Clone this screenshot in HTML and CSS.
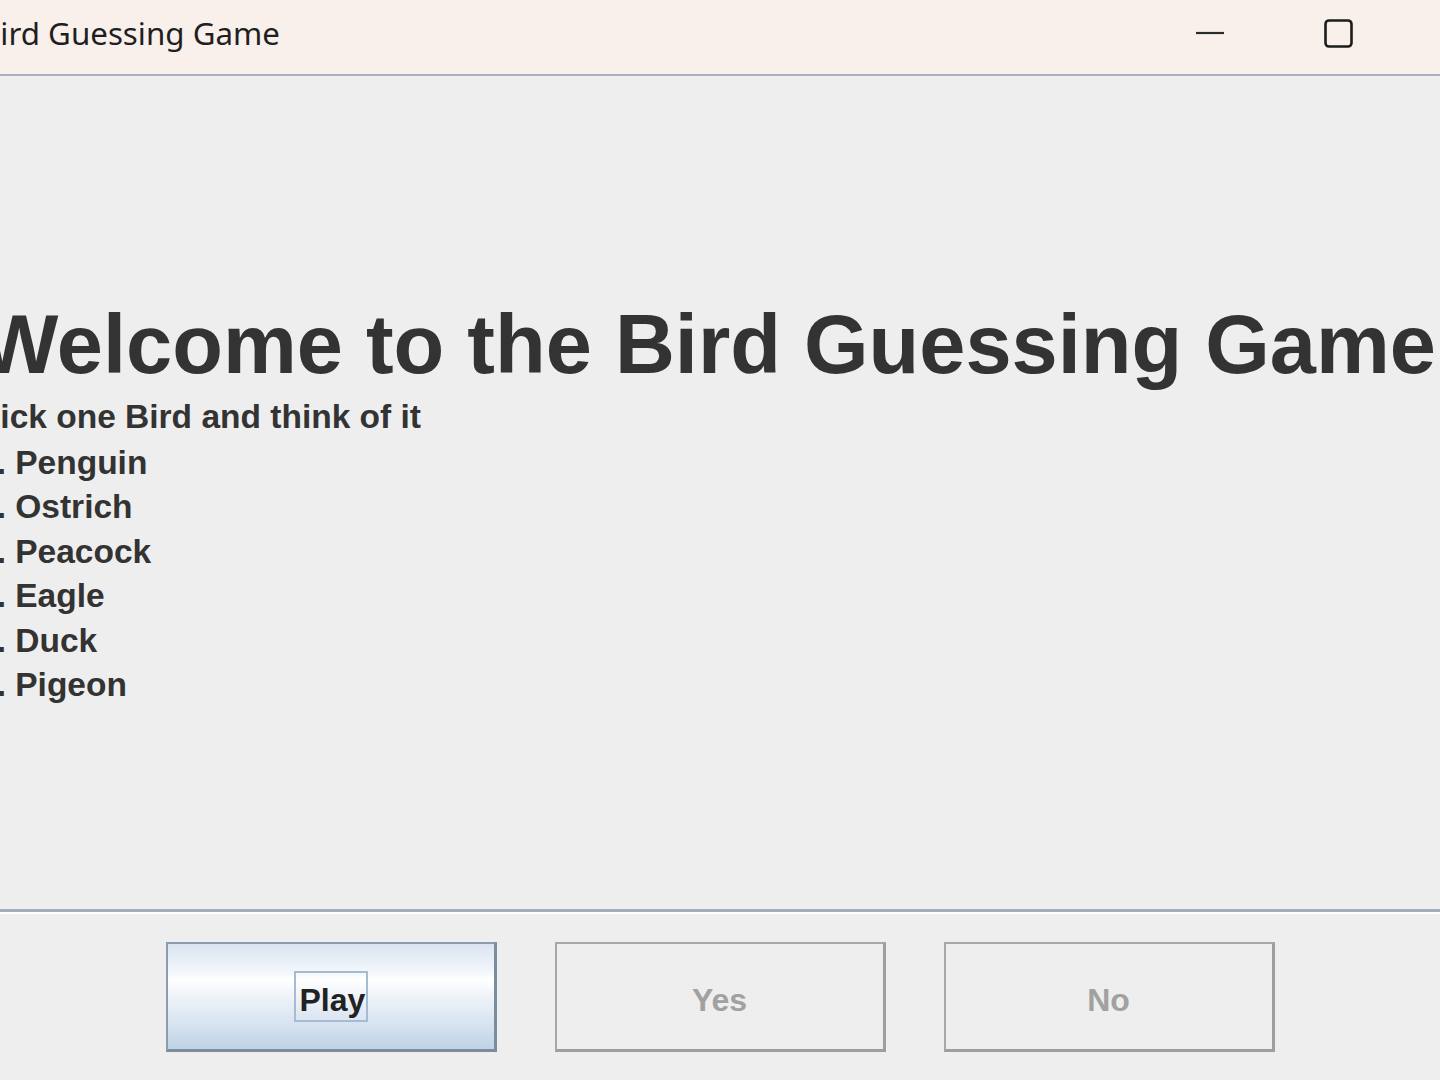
FILE: index.html
```html
<!DOCTYPE html>
<html lang="en">
<head>
<meta charset="utf-8">
<title>Bird Guessing Game</title>
<link rel="stylesheet" href="styles.css">
</head>
<body>
<div class="window">
  <header class="titlebar">
    <span class="title">Bird Guessing Game</span>
    <div class="controls">
      <span class="ctl ctl-min"><svg width="28" height="4" viewBox="0 0 28 4"><line x1="0" y1="2" x2="28" y2="2" stroke="#2b2b2b" stroke-width="2.2"/></svg></span>
      <span class="ctl ctl-max"><svg width="30" height="30" viewBox="0 0 30 30"><rect x="1.5" y="1.5" width="26" height="26" rx="3.5" ry="3.5" fill="none" stroke="#1c1c1c" stroke-width="2.6"/></svg></span>
    </div>
  </header>
  <main class="content">
    <div class="message">
      <h1 class="heading">Welcome to the Bird Guessing Game</h1>
      <p class="sub">Pick one Bird and think of it</p>
      <div class="birds">
        <div class="bird">1. Penguin</div>
        <div class="bird">2. Ostrich</div>
        <div class="bird">3. Peacock</div>
        <div class="bird">4. Eagle</div>
        <div class="bird">5. Duck</div>
        <div class="bird">6. Pigeon</div>
      </div>
    </div>
  </main>
  <footer class="actions">
    <button class="btn btn-play" type="button"><span class="focus">Play</span></button>
    <button class="btn btn-disabled" type="button" disabled>Yes</button>
    <button class="btn btn-disabled" type="button" disabled>No</button>
  </footer>
</div>
</body>
</html>
```

FILE: styles.css
```css
html, body {
  margin: 0;
  padding: 0;
  background: #eeeeee;
  overflow: hidden;
}

.window {
  width: 1440px;
  height: 1080px;
  display: flex;
  flex-direction: column;
  background: #eeeeee;
  overflow: hidden;
}

.titlebar {
  height: 74px;
  flex: 0 0 auto;
  background: #f9f0ec;
  border-bottom: 2px solid #a7b1be;
  display: flex;
  align-items: center;
  overflow: hidden;
}

.title {
  font-family: "Noto Sans", "Open Sans", sans-serif;
  font-size: 31.3px;
  color: #1f1f1f;
  margin-left: -20px;
  white-space: nowrap;
  line-height: 1;
  padding-bottom: 7px;
}

.controls {
  margin-left: auto;
  display: flex;
  align-items: center;
  gap: 100px;
  padding-right: 86px;
}

.ctl {
  display: flex;
  align-items: center;
  justify-content: center;
}

.ctl svg {
  display: block;
}

.ctl-min {
  width: 28px;
  margin-top: -8px;
}

.ctl-max {
  width: 30px;
  margin-top: -6px;
}

.content {
  flex: 1 1 auto;
  overflow: hidden;
}

.message {
  padding-top: 224px;
  font-family: "Liberation Sans", Arial, sans-serif;
  font-weight: bold;
  color: #333333;
  white-space: nowrap;
}

.heading {
  margin: 0 0 0 -20px;
  font-size: 83px;
  line-height: 90px;
  font-weight: bold;
}

.sub {
  margin: 5px 0 0 -22px;
  font-size: 33.5px;
  line-height: 44px;
}

.birds {
  margin: 2px 0 0 -22px;
}

.bird {
  font-size: 33.5px;
  line-height: 44.4px;
}

.actions {
  flex: 0 0 auto;
  border-top: 3px solid #a4aebb;
  box-shadow: inset 0 2px 0 #ffffff;
  display: flex;
  justify-content: center;
  align-items: flex-start;
  gap: 58px;
  padding-top: 30px;
  box-sizing: border-box;
  height: 171px;
}

.btn {
  width: 331px;
  height: 110px;
  box-sizing: border-box;
  font-family: "Liberation Sans", Arial, sans-serif;
  font-weight: bold;
  font-size: 32px;
  display: flex;
  align-items: center;
  justify-content: center;
  padding: 7px 0 0 0;
  margin: 0;
}

.btn-play {
  color: #222222;
  border-style: solid;
  border-width: 2px 3px 3px 2px;
  border-color: #8d9cad #7d8c9b #7d8c9b #8d9cad;
  background: linear-gradient(to bottom, #dae4f1 0%, #f4f8fc 28%, #ffffff 34%, #eef3f9 50%, #d8e4f1 75%, #bfd2e7 100%);
  padding-top: 0;
}

.focus {
  display: inline-block;
  border: 2px solid #a6bad0;
  padding: 11px 0 3px 4px;
  line-height: 33px;
  width: 74px;
  box-sizing: border-box;
  text-align: left;
}

.btn-disabled {
  color: #a1a1a1;
  background: #eeeeee;
  border-style: solid;
  border-width: 2px 3px 3px 2px;
  border-color: #a8a8a8 #9e9e9e #9e9e9e #a8a8a8;
}
```
